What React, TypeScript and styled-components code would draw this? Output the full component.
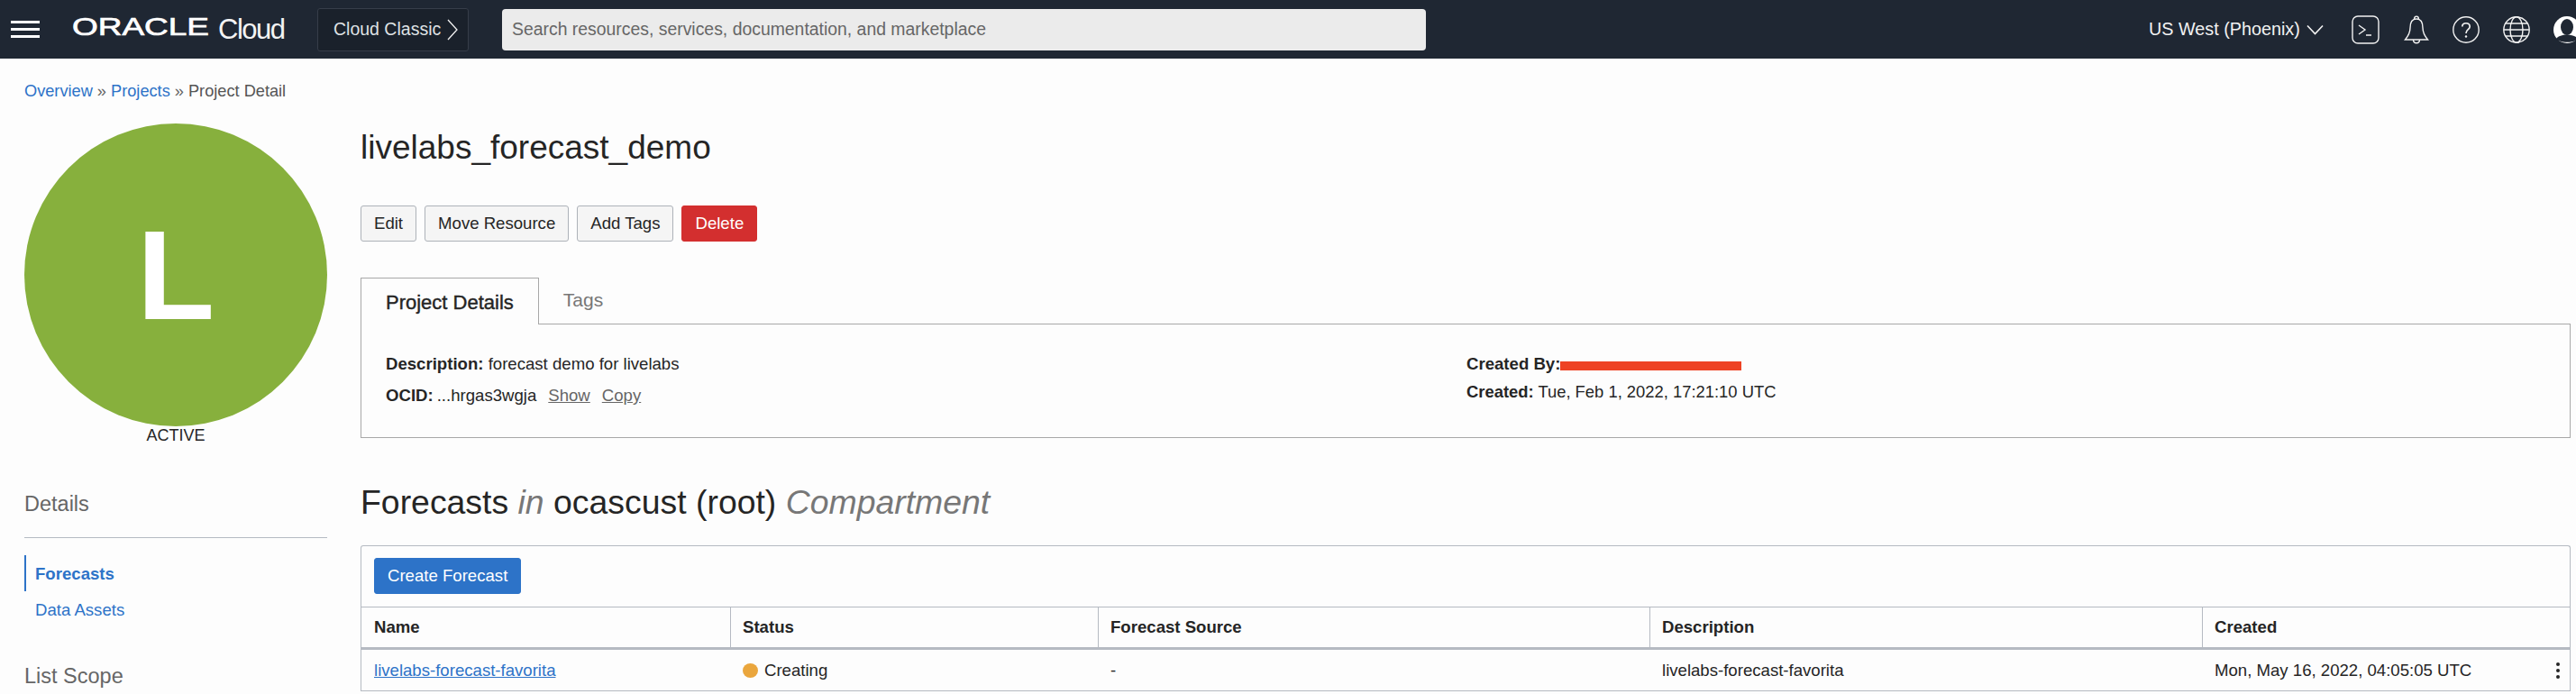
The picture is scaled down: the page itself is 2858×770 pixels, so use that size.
import React from 'react';
import styled, { createGlobalStyle } from 'styled-components';

const GlobalStyle = createGlobalStyle`
  html, body {
    margin: 0;
    padding: 0;
    background: #fdfdfd;
    font-family: 'Liberation Sans', Arial, sans-serif;
    color: #252525;
  }
  * { box-sizing: border-box; }
  svg { flex: none; }
`;

const Page = styled.div`
  width: 2858px;
  height: 770px;
  overflow: hidden;
  font-size: 18.6px;
`;

const TopBar = styled.header`
  height: 65px;
  background: #1f2733;
  display: flex;
  align-items: center;
  padding: 0 0 0 12px;
  color: #fff;
`;

const Burger = styled.div`
  width: 32px;
  height: 19px;
  display: flex;
  flex-direction: column;
  justify-content: space-between;
  margin-right: 36px;

  span {
    display: block;
    height: 3px;
    background: #fff;
  }
`;

const Logo = styled.div`
  display: flex;
  align-items: center;
  width: 272px;
  height: 65px;
`;

const CloudWord = styled.span`
  font-size: 31px;
  letter-spacing: -1.5px;
  line-height: 65px;
  margin-left: 10px;
  color: #f4f4f4;
`;

const ClassicButton = styled.div`
  width: 168px;
  height: 48px;
  background: #1a212b;
  border: 1px solid #363d49;
  border-radius: 3px;
  display: flex;
  align-items: center;
  gap: 6px;
  padding-left: 17px;
  font-size: 19.5px;
  white-space: nowrap;
  color: #dfe1e4;
`;

const SearchBox = styled.div`
  width: 1025px;
  height: 46px;
  margin-left: 37px;
  background: #ebebeb;
  border-radius: 4px;
  display: flex;
  align-items: center;
  padding-left: 11px;
  font-size: 19.4px;
  color: #666;
`;

const TopRight = styled.div`
  margin-left: auto;
  display: flex;
  align-items: center;
  height: 65px;
  width: 474px;
  flex: none;
  overflow: hidden;
`;

const Region = styled.span`
  font-size: 19.8px;
  color: #f2f2f2;
  margin-right: 7px;
  white-space: nowrap;
`;

const IconSlot = styled.div<{ $gap?: number }>`
  margin-left: ${(p) => p.$gap ?? 26}px;
  display: flex;
  flex: none;
`;

const Body = styled.div`
  display: flex;
  height: 705px;
`;

const Side = styled.aside`
  width: 400px;
  flex: none;
  padding: 25px 37px 0 27px;
`;

const Crumbs = styled.div`
  font-size: 18.2px;
  line-height: 22px;
  color: #555;
  white-space: nowrap;

  a {
    color: #2d73c8;
  }
  i {
    font-style: normal;
    color: #666;
  }
`;

const Avatar = styled.div`
  width: 336px;
  height: 336px;
  margin-top: 25px;
  border-radius: 50%;
  background: #87b03d;
  color: #fff;
  display: flex;
  align-items: center;
  justify-content: center;
  font-size: 141px;
  font-weight: 700;
  line-height: 1;
`;

const StateLabel = styled.div`
  text-align: center;
  font-size: 18px;
  line-height: 20px;
  margin-top: 0;
`;

const SideHeading = styled.h3<{ $top: number }>`
  margin: ${(p) => p.$top}px 0 0;
  font-size: 23.5px;
  line-height: 28px;
  font-weight: 400;
  color: #666;
`;

const Rule = styled.div`
  height: 1px;
  background: #b5bac2;
  margin-top: 23px;
`;

const SideNav = styled.nav`
  margin-top: 19px;
`;

const NavItem = styled.a<{ $active?: boolean }>`
  display: block;
  height: 40px;
  line-height: 42px;
  padding-left: ${(p) => (p.$active ? 10 : 12)}px;
  color: #2d73c8;
  font-weight: ${(p) => (p.$active ? 700 : 400)};
  border-left: ${(p) => (p.$active ? '2px solid #2d73c8' : 'none')};
`;

const Main = styled.main`
  flex: 1;
  min-width: 0;
  padding: 0 6px 0 0;
`;

const Title = styled.h1`
  margin: 74px 0 0;
  font-size: 37px;
  line-height: 50px;
  font-weight: 400;
  color: #252525;
`;

const Actions = styled.div`
  display: flex;
  gap: 9px;
  margin-top: 39px;
`;

const Button = styled.button<{ $kind?: 'danger' | 'primary' }>`
  height: 40px;
  padding: 0 14px;
  font: inherit;
  border-radius: 3px;
  white-space: nowrap;
  border: 1px solid ${(p) => (p.$kind === 'danger' ? '#d32f2f' : p.$kind === 'primary' ? '#2d73c8' : '#adb2b9')};
  background: ${(p) => (p.$kind === 'danger' ? '#d32f2f' : p.$kind === 'primary' ? '#2d73c8' : '#f5f5f5')};
  color: ${(p) => (p.$kind ? '#fff' : '#252525')};
`;

const Tabs = styled.div`
  display: flex;
  margin-top: 40px;
  height: 52px;
  border-bottom: 1px solid #a8a8a8;
`;

const Tab = styled.div<{ $active?: boolean }>`
  height: ${(p) => (p.$active ? 52 : 51)}px;
  padding: 0 27px;
  line-height: ${(p) => (p.$active ? 54 : 50)}px;
  font-size: ${(p) => (p.$active ? 22 : 21)}px;
  color: ${(p) => (p.$active ? '#252525' : '#777')};
  background: #fdfdfd;
  ${(p) => p.$active && 'border: 1px solid #a8a8a8; border-bottom: none; -webkit-text-stroke: 0.4px #252525;'}
`;

const DetailPanel = styled.section`
  display: grid;
  grid-template-columns: 1199px 1fr;
  height: 126px;
  padding: 26px 27px 0;
  border: 1px solid #a8a8a8;
  border-top: none;
  line-height: 35px;
`;

const DetailRow = styled.div<{ $lift?: number; $size?: number }>`
  white-space: nowrap;
  margin-top: ${(p) => p.$lift ?? 0}px;
  font-size: ${(p) => p.$size ?? 18.6}px;

  b {
    font-weight: 700;
  }
`;

const Mono = styled.span`
  margin-left: 4px;
`;

const Muted = styled.a`
  color: #666;
  text-decoration: underline;
  margin-left: 13px;
`;

const Redacted = styled.span`
  display: inline-block;
  width: 201px;
  height: 10px;
  background: #ee4223;
  vertical-align: -1px;
`;

const SectionTitle = styled.h2`
  margin: 46px 0 0;
  font-size: 37.4px;
  line-height: 50px;
  font-weight: 400;
  color: #252525;

  em {
    color: #777;
  }
`;

const TablePanel = styled.section`
  margin-top: 23px;
  border: 1px solid #b5bac2;
  border-radius: 3px 3px 0 0;
  border-bottom: none;
`;

const Toolbar = styled.div`
  height: 67px;
  padding: 13px 14px;
  display: flex;
  align-items: flex-start;
`;

const GridRow = styled.div<{ $head?: boolean }>`
  display: grid;
  grid-template-columns: 409px 408px 612px 613px 1fr;
  height: ${(p) => (p.$head ? 48 : 46)}px;
  border-top: ${(p) => (p.$head ? '1px solid #b5bac2' : 'none')};
  border-bottom: ${(p) => (p.$head ? '3px solid #b5bac2' : '1px solid #b5bac2')};
  font-weight: ${(p) => (p.$head ? 700 : 400)};
`;

const Cell = styled.div<{ $head?: boolean; $first?: boolean }>`
  display: flex;
  align-items: center;
  gap: 7px;
  padding-left: ${(p) => (p.$head && !p.$first ? 13 : 14)}px;
  position: relative;
  white-space: nowrap;
  border-left: ${(p) => (p.$head && !p.$first ? '1px solid #b5bac2' : 'none')};
`;

const NameLink = styled.a`
  color: #2d73c8;
  text-decoration: underline;
`;

const Dot = styled.span`
  width: 17px;
  height: 16px;
  border-radius: 50%;
  background: #eaa63d;
`;

const Kebab = styled.div`
  position: absolute;
  right: 11px;
  top: 50%;
  transform: translateY(-50%);
  display: flex;
  flex-direction: column;
  gap: 3px;

  span {
    width: 4px;
    height: 4px;
    border-radius: 50%;
    background: #252525;
  }
`;

const stroke = { fill: 'none', stroke: '#f2f2f2', strokeWidth: 1.4 };

const App: React.FC = () => {
  return (
    <Page>
      <GlobalStyle />
      <TopBar>
        <Burger>
          <span />
          <span />
          <span />
        </Burger>
        <Logo>
          <svg width="152" height="65" viewBox="0 0 152 65">
            <text
              x="0"
              y="39"
              fontSize="28"
              fill="#fff"
              stroke="#fff"
              strokeWidth="0.7"
              textLength="152"
              lengthAdjust="spacingAndGlyphs"
              fontFamily="Liberation Sans"
            >
              ORACLE
            </text>
          </svg>
          <CloudWord>Cloud</CloudWord>
        </Logo>
        <ClassicButton>
          Cloud Classic
          <svg width="14" height="28" viewBox="0 0 14 28">
            <path d="M2 3 L12 14 L2 25" {...stroke} strokeWidth={1.3} />
          </svg>
        </ClassicButton>
        <SearchBox>Search resources, services, documentation, and marketplace</SearchBox>
        <TopRight>
          <Region>US West (Phoenix)</Region>
          <svg width="19" height="12" viewBox="0 0 19 12">
            <path d="M1 1.5 L9.5 10.5 L18 1.5" {...stroke} strokeWidth={1.6} />
          </svg>
          <IconSlot $gap={31}>
            <svg width="31" height="32" viewBox="0 0 31 32">
              <rect x="1" y="1" width="29" height="30" rx="6" {...stroke} />
              <path d="M8 11 L15 16 L8 21 M16 22 H22" {...stroke} />
            </svg>
          </IconSlot>
          <IconSlot $gap={27}>
            <svg width="28" height="33" viewBox="0 0 28 33">
              <path
                d="M14 5 C8 5 7 10 7 15 C7 21 4 25 1.5 28 H26.5 C24 25 21 21 21 15 C21 10 20 5 14 5 Z M11.5 5.5 C11.5 1 16.5 1 16.5 5.5 M10.5 28 C10.5 33 17.5 33 17.5 28"
                {...stroke}
              />
            </svg>
          </IconSlot>
          <IconSlot $gap={26}>
            <svg width="30" height="32" viewBox="0 0 30 32">
              <circle cx="15" cy="16" r="14.2" {...stroke} />
              <path d="M10.8 12.5 C10.8 7.5 19.2 7.5 19.2 12.5 C19.2 16 15 15.5 15 20" {...stroke} strokeWidth={1.7} />
              <circle cx="15" cy="23.5" r="1.2" fill="#f2f2f2" />
            </svg>
          </IconSlot>
          <IconSlot $gap={26}>
            <svg width="30" height="32" viewBox="0 0 30 32">
              <circle cx="15" cy="16" r="14.2" {...stroke} />
              <ellipse cx="15" cy="16" rx="7" ry="14.2" {...stroke} />
              <path d="M1 16 H29 M3 9 H27 M3 23 H27" {...stroke} />
            </svg>
          </IconSlot>
          <IconSlot $gap={26}>
            <svg width="30" height="32" viewBox="0 0 30 32">
              <circle cx="15" cy="16" r="15" fill="#fff" />
              <ellipse cx="15" cy="13" rx="7" ry="9" fill="#1f2733" />
              <path d="M3 26 C7 20 23 20 27 26 C23 31 7 31 3 26 Z" fill="#1f2733" />
            </svg>
          </IconSlot>
        </TopRight>
      </TopBar>
      <Body>
        <Side>
          <Crumbs>
            <a>Overview</a> <i>»</i> <a>Projects</a> <i>»</i> Project Detail
          </Crumbs>
          <Avatar>L</Avatar>
          <StateLabel>ACTIVE</StateLabel>
          <SideHeading $top={52}>Details</SideHeading>
          <Rule />
          <SideNav>
            <NavItem $active>Forecasts</NavItem>
            <NavItem>Data Assets</NavItem>
          </SideNav>
          <SideHeading $top={40}>List Scope</SideHeading>
        </Side>
        <Main>
          <Title>livelabs_forecast_demo</Title>
          <Actions>
            <Button>Edit</Button>
            <Button>Move Resource</Button>
            <Button>Add Tags</Button>
            <Button $kind="danger">Delete</Button>
          </Actions>
          <Tabs>
            <Tab $active>Project Details</Tab>
            <Tab>Tags</Tab>
          </Tabs>
          <DetailPanel>
            <div>
              <DetailRow>
                <b>Description:</b> forecast demo for livelabs
              </DetailRow>
              <DetailRow>
                <b>OCID:</b>
                <Mono>...hrgas3wgja</Mono>
                <Muted>Show</Muted>
                <Muted>Copy</Muted>
              </DetailRow>
            </div>
            <div>
              <DetailRow>
                <b>Created By:</b>
                <Redacted />
              </DetailRow>
              <DetailRow $lift={-4} $size={18.4}>
                <b>Created:</b> Tue, Feb 1, 2022, 17:21:10 UTC
              </DetailRow>
            </div>
          </DetailPanel>
          <SectionTitle>
            Forecasts <em>in</em> ocascust (root) <em>Compartment</em>
          </SectionTitle>
          <TablePanel>
            <Toolbar>
              <Button $kind="primary">Create Forecast</Button>
            </Toolbar>
            <GridRow $head>
              <Cell $head $first>Name</Cell>
              <Cell $head>Status</Cell>
              <Cell $head>Forecast Source</Cell>
              <Cell $head>Description</Cell>
              <Cell $head>Created</Cell>
            </GridRow>
            <GridRow>
              <Cell>
                <NameLink>livelabs-forecast-favorita</NameLink>
              </Cell>
              <Cell>
                <Dot />
                Creating
              </Cell>
              <Cell>-</Cell>
              <Cell>livelabs-forecast-favorita</Cell>
              <Cell>
                Mon, May 16, 2022, 04:05:05 UTC
                <Kebab>
                  <span />
                  <span />
                  <span />
                </Kebab>
              </Cell>
            </GridRow>
          </TablePanel>
        </Main>
      </Body>
    </Page>
  );
};

export default App;
